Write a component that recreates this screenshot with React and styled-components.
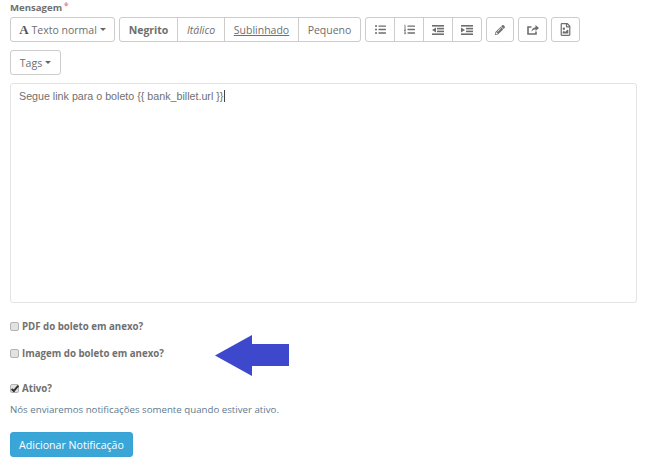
import React from "react";
import styled, { createGlobalStyle } from "styled-components";
import {
  FaPencilAlt,
  FaListUl,
  FaListOl,
  FaRegFileImage,
} from "react-icons/fa";

const GlobalStyle = createGlobalStyle`
  html, body {
    margin: 0;
    padding: 0;
    background: #fff;
    font-family: "Open Sans", "Liberation Sans", sans-serif;
    color: #666;
  }
`;

const Page = styled.div`
  position: relative;
  width: 649px;
  height: 469px;
  overflow: hidden;
  box-sizing: border-box;
  padding: 0 12px 0 10px;
  display: flex;
  flex-direction: column;
`;

const Label = styled.label`
  height: 17px;
  line-height: 12px;
  font-size: 9.6px;
  font-weight: 700;
  color: #707070;
`;

const Required = styled.span`
  color: #e58a82;
  font-size: 8px;
  margin-left: 2px;
  vertical-align: 2px;
`;

const Toolbar = styled.div`
  display: flex;
  gap: 4px;
  margin-bottom: 8px;
`;

const Group = styled.div`
  display: flex;
  height: 25px;
  box-sizing: border-box;
  border: 1px solid #ccc;
  border-radius: 3px;
  background: #fff;
`;

const ToolButton = styled.div`
  box-sizing: border-box;
  width: ${(p) => p.$width}px;
  display: flex;
  align-items: center;
  justify-content: center;
  gap: 3px;
  font-size: 10.5px;
  color: #6e6e6e;
  border-left: ${(p) => (p.$first ? "none" : "1px solid #ccc")};
  font-weight: ${(p) => (p.$bold ? 700 : 400)};
  font-style: ${(p) => (p.$italic ? "italic" : "normal")};
  text-decoration: ${(p) => (p.$underline ? "underline" : "none")};
  white-space: nowrap;
`;

const SerifA = styled.span`
  font-family: "Liberation Serif", serif;
  font-weight: 700;
  font-size: 13px;
  color: #555;
`;

const Caret = styled.span`
  display: inline-block;
  width: 0;
  height: 0;
  border-left: 3px solid transparent;
  border-right: 3px solid transparent;
  border-top: 3px solid #666;
`;

const Editor = styled.div`
  box-sizing: border-box;
  height: 220px;
  border: 1px solid #e3e3e3;
  border-radius: 3px;
  padding: 5px 8px;
  font-family: "Liberation Sans", Arial, sans-serif;
  font-size: 10.7px;
  line-height: 15px;
  color: #707070;
  margin-bottom: 16px;
`;

const Cursor = styled.span`
  border-left: 1px solid #444;
  margin-left: 1px;
`;

const CheckRow = styled.div`
  display: flex;
  align-items: center;
  gap: 3px;
  height: 14px;
  margin-bottom: ${(p) => p.$after}px;
  font-size: 9.7px;
  font-weight: 700;
  color: #707070;
`;

const Check = styled.input.attrs({ type: "checkbox", readOnly: true })`
  appearance: none;
  position: relative;
  box-sizing: border-box;
  width: 9px;
  height: 9px;
  margin: 0;
  border: 1px solid #b4b4b4;
  border-radius: 2px;
  background: #e2e2e2;

  &:checked::after {
    content: "";
    position: absolute;
    left: 2px;
    top: -1px;
    width: 2px;
    height: 6px;
    border: solid #333;
    border-width: 0 2px 2px 0;
    transform: rotate(40deg);
  }
`;

const Help = styled.p`
  margin: 0 0 15px;
  height: 14px;
  line-height: 14px;
  font-size: 9.7px;
  color: #5f7a8d;
`;

const Submit = styled.button`
  align-self: flex-start;
  width: 123px;
  height: 25px;
  padding: 0;
  border: 1px solid #37a3d4;
  border-radius: 3px;
  background: #3aa6d8;
  color: #fff;
  font-family: inherit;
  font-size: 10.6px;
`;

const ArrowMark = styled.svg`
  position: absolute;
  left: 215px;
  top: 335px;
`;

const IndentIcon = ({ right }) => (
  <svg width="12" height="10" viewBox="0 0 12 10" fill="currentColor">
    <rect x="0" y="0" width="12" height="1.6" />
    <rect x="5" y="2.8" width="7" height="1.6" />
    <rect x="5" y="5.6" width="7" height="1.6" />
    <rect x="0" y="8.4" width="12" height="1.6" />
    <path d={right ? "M0 2.5 L4 5 L0 7.5 Z" : "M4 2.5 L0 5 L4 7.5 Z"} />
  </svg>
);

const ShareIcon = () => (
  <svg width="12" height="11" viewBox="0 0 12 11">
    <path d="M9 7.5V10H1V3H4.5" fill="none" stroke="currentColor" strokeWidth="1.6" />
    <path d="M4.5 8C4.5 5 6.5 3.4 8.5 3.2V1L12 4L8.5 7V5.2C7 5.2 5.5 6 4.5 8Z" fill="currentColor" />
  </svg>
);

const listIcons = [
  <FaListUl size={11} />,
  <FaListOl size={11} />,
  <IndentIcon />,
  <IndentIcon right />,
];

export default function App() {
  return (
    <Page>
      <GlobalStyle />
      <Label>
        Mensagem<Required>*</Required>
      </Label>
      <Toolbar>
        <Group>
          <ToolButton $first $width={103}>
            <SerifA>A</SerifA> Texto normal <Caret />
          </ToolButton>
        </Group>
        <Group>
          <ToolButton $first $bold $width={57}>Negrito</ToolButton>
          <ToolButton $italic $width={47}>Itálico</ToolButton>
          <ToolButton $underline $width={74}>Sublinhado</ToolButton>
          <ToolButton $width={62}>Pequeno</ToolButton>
        </Group>
        <Group>
          {listIcons.map((icon, i) => (
            <ToolButton key={i} $first={i === 0} $width={i === 0 ? 28 : 29}>
              {icon}
            </ToolButton>
          ))}
        </Group>
        <Group>
          <ToolButton $first $width={26}><FaPencilAlt size={10} /></ToolButton>
        </Group>
        <Group>
          <ToolButton $first $width={27}><ShareIcon /></ToolButton>
        </Group>
        <Group>
          <ToolButton $first $width={27}><FaRegFileImage size={13} /></ToolButton>
        </Group>
      </Toolbar>
      <Toolbar>
        <Group>
          <ToolButton $first $width={49}>Tags <Caret /></ToolButton>
        </Group>
      </Toolbar>
      <Editor>
        Segue link para o boleto {"{{ bank_billet.url }}"}
        <Cursor />
      </Editor>
      <CheckRow $after={13}>
        <Check />
        PDF do boleto em anexo?
      </CheckRow>
      <CheckRow $after={21}>
        <Check />
        Imagem do boleto em anexo?
      </CheckRow>
      <CheckRow $after={8}>
        <Check defaultChecked />
        Ativo?
      </CheckRow>
      <Help>Nós enviaremos notificações somente quando estiver ativo.</Help>
      <Submit>Adicionar Notificação</Submit>
      <ArrowMark width="75" height="42" viewBox="0 0 75 42">
        <path d="M0 20.5 L37 0 V9 H74 V31 H37 V41 Z" fill="#3d48cc" />
      </ArrowMark>
    </Page>
  );
}
